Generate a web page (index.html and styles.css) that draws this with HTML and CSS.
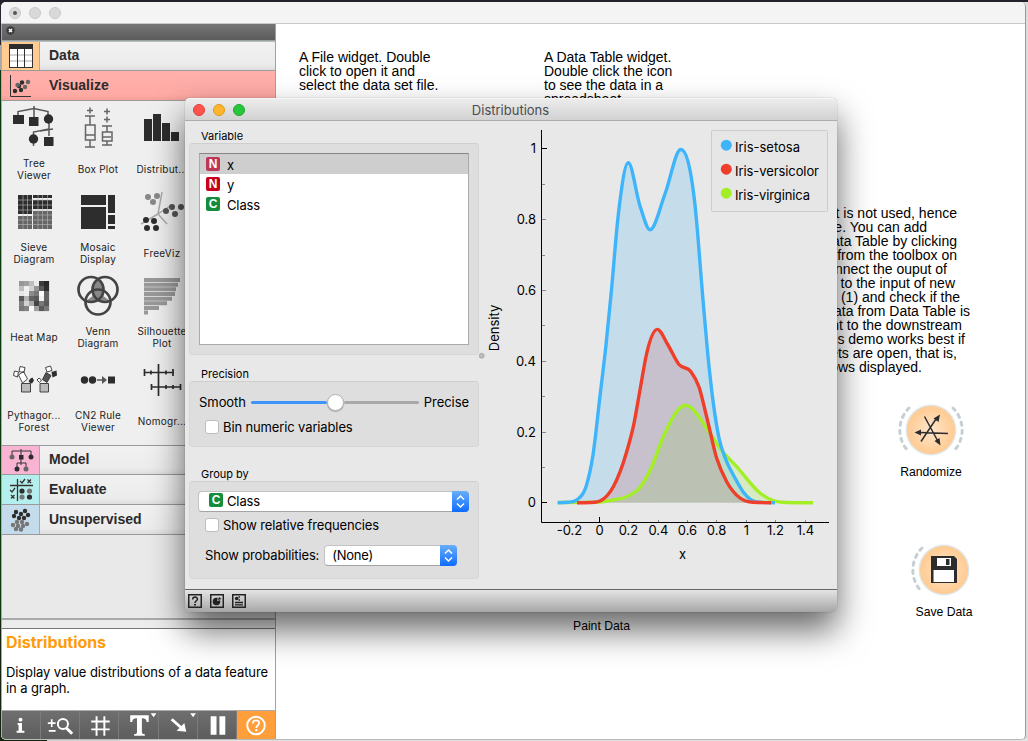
FILE: index.html
```html
<!DOCTYPE html>
<html lang="en">
<head>
<meta charset="utf-8">
<title>Distributions</title>
<link rel="stylesheet" href="styles.css">
</head>
<body>
<div class="window">
  <header class="titlebar"><i class="dot edited"></i><i class="dot"></i><i class="dot"></i></header>
  <div class="workspace">
    <aside class="dock">
      <div class="dock-head">
        <svg width="9" height="9" viewBox="0 0 9 9"><circle cx="4.500" cy="4.500" r="4.200" fill="#3c3c3c"/><path d="M3 3l3 3M6 3L3 6" stroke="#fff" stroke-width="1.500"/></svg>
      </div>
      <div class="cat data"><span class="cat-icon"><svg width="24" height="24" viewBox="0 0 24 24"><rect x="0.500" y="0.500" width="23" height="23" fill="#fff" stroke="#333"/><rect width="24" height="5" fill="#2d2d2d"/><path d="M1 11h22M1 17h22" stroke="#aaa"/><path d="M8.500 5v19M15.500 5v19" stroke="#333"/></svg></span><span>Data</span></div>
      <div class="cat visualize"><span class="cat-icon"><svg width="24" height="24" viewBox="0 0 24 24"><path d="M1.500 1v21.500H22" stroke="#333" fill="none"/><g fill="#2d2d2d"><circle cx="6" cy="17" r="2.200"/><circle cx="12" cy="16" r="2.200"/><circle cx="10" cy="12" r="2.200"/><circle cx="13" cy="8.500" r="2.200"/></g><g fill="#666"><circle cx="8.500" cy="11" r="2.200"/><circle cx="16" cy="13" r="2.200"/><circle cx="19" cy="8" r="2.200"/></g></svg></span><span>Visualize</span></div>
      <div class="widgets">
        <div class="widget"><svg viewBox="0 0 44 44"><path d="M6 11V5.500L22 2.500 36 5.500V11M22 0v11M37 16v7L21.500 26v14M37 23v7M28 25l13-2" stroke="#555" stroke-width="1.500" fill="none"/><g fill="#2d2d2d"><rect x="1" y="9" width="11" height="9"/><rect x="17" y="11" width="9.500" height="9"/><circle cx="36.500" cy="13" r="4.700"/><circle cx="21.500" cy="33" r="4.700"/><rect x="32" y="31" width="9.500" height="9"/></g></svg><p>Tree<br>Viewer</p></div>
        <div class="widget"><svg viewBox="0 0 44 44"><g stroke="#666" stroke-width="1.500" fill="none"><path d="M14 1.500v6M11 4.500h6M9 10h10M14 10v9M14 34v7M9 41h10M9 29h10M31 2.500v6M28 5.500h6M31 10.500v6M28 13.500h6M26 20h10M31 20v6M31 35v4M26 39h10M27 31h8"/><rect x="9.500" y="19" width="9.500" height="15"/><rect x="26.500" y="26" width="9.500" height="9"/></g></svg><p>Box Plot</p></div>
        <div class="widget"><svg viewBox="0 0 44 44"><path d="M4 13h8v22H4zM13 8h8v27h-8zM22 17h8v18h-8zM31 26h8v9h-8z" fill="#2d2d2d"/></svg><p>Distribut...</p></div>
        <div class="widget"><svg viewBox="0 0 44 44"><path d="M6 5h14v19H6zM21 5h19v3H21zM21 10h19v9H21z" fill="#2d2d2d"/><path d="M6 26h14v13H6zM21 21h19v18H21z" fill="#666"/><path d="M11 5v34M15.500 5v34M26 5v34M30.500 5v34M35.500 5v34M6 10h34M6 15h34M6 20h34M6 30h34M6 34.500h34M21 25h19" stroke="#bbb" stroke-width=".6"/></svg><p>Sieve<br>Diagram</p></div>
        <div class="widget"><svg viewBox="0 0 44 44"><path d="M5 5h25v10H5zM5 17h25v22H5zM32 5h7v18h-7zM32 25h7v9h-7zM32 36h7v3h-7z" fill="#2d2d2d"/></svg><p>Mosaic<br>Display</p></div>
        <div class="widget"><svg viewBox="0 0 44 44"><path d="M22 2l-4 22L1 34M18 24l9 10M18 24l12-8" stroke="#aaa" stroke-width="1.500" fill="none"/><g fill="#888"><circle cx="8" cy="7" r="3"/><circle cx="17" cy="6" r="3"/><circle cx="13" cy="12" r="3"/></g><g fill="#555"><circle cx="26" cy="21" r="3"/><circle cx="32" cy="17" r="3"/><circle cx="41" cy="17" r="3"/><circle cx="35" cy="24" r="3"/></g><g fill="#2d2d2d"><circle cx="6" cy="30" r="3"/><circle cx="14" cy="31" r="3"/><circle cx="7" cy="38" r="3"/><circle cx="16" cy="38" r="3"/></g></svg><p>FreeViz</p></div>
        <div class="widget"><svg viewBox="0 0 44 44" id="heat"></svg><p>Heat Map</p></div>
        <div class="widget"><svg viewBox="0 0 44 44"><path d="M22 6a12.500 12.500 0 0 1 5.500 10v11H16.500V16A12.500 12.500 0 0 1 22 6M22 18l12 9-12 1-12-1z" fill="#888"/><g fill="none" stroke="#444" stroke-width="2.700"><circle cx="15" cy="15.500" r="12.500"/><circle cx="29" cy="15.500" r="12.500"/><circle cx="22" cy="28" r="12.500"/></g></svg><p>Venn<br>Diagram</p></div>
        <div class="widget"><svg viewBox="0 0 44 44"><path d="M4 4h36v4H4zM4 8.700h34v4H4zM4 13.300h32v4H4zM4 18h31v4H4zM4 22.700h28v4H4zM4 27.300h23v4H4zM4 32h15v4H4zM4 36.600h4v4H4z" fill="#999"/></svg><p>Silhouette<br>Plot</p></div>
        <div class="widget"><svg viewBox="0 0 44 44"><g stroke="#333" fill="#fff" stroke-width=".9"><path d="M6.500 17l5-3.500 4 7.500-5 4zM1.500 17.500l1-4.500 4 1-1 5zM8 8.500l5 1-1 5-5-1zM25 22l2-2 2.500 2-2 2.500zM33.500 9.500l5-1.500 1.500 4.500-5 1.500z"/><path d="M9.500 25.500h9V34h-9zM28 25.500h8.500V34H28z" fill="#bbb"/><path d="M30.500 21.500l3.500-7 5 3-4 7z" fill="#555"/></g><path d="M16.500 23l2-2.500 2-1 1.500 3-2 3-2-.5zM39.500 14l5-1.500.5 5-4.500 2z" fill="#2d2d2d"/></svg><p>Pythagor...<br>Forest</p></div>
        <div class="widget"><svg viewBox="0 0 44 44"><path d="M21 22h8" stroke="#555" stroke-width="1.500"/><path d="M26 18l5 4-5 4z" fill="#555"/><g fill="#2d2d2d"><circle cx="8.500" cy="22" r="3.700"/><circle cx="16.500" cy="22" r="3.700"/><path d="M32 18.500h7v7h-7z"/></g></svg><p>CN2 Rule<br>Viewer</p></div>
        <div class="widget"><svg viewBox="0 0 44 44"><path d="M18.500 6v32M4 14.500h30M11 29h30M4.500 11v7M33 11v7M11.500 26v6M40.500 26v6M11 12.500v4M26 12.500v4M26 27v4M33 27v4" stroke="#2d2d2d" stroke-width="1.700"/></svg><p>Nomogr...</p></div>
      </div>
      <div class="cat model"><span class="cat-icon"><svg width="26" height="26" viewBox="0 0 26 26"><path d="M4 9V4h19v5M13 2v16M9 21v-5h9v5" stroke="#333" fill="none"/><g fill="#666"><circle cx="4" cy="10" r="2.500"/><circle cx="18" cy="22" r="2.500"/></g><g fill="#2d2d2d"><path d="M11 8h4.500v4.500H11z"/><circle cx="23" cy="10" r="2.500"/><circle cx="9" cy="22" r="2.500"/></g></svg></span><span>Model</span></div>
      <div class="cat evaluate"><span class="cat-icon"><svg width="26" height="26" viewBox="0 0 26 26"><path d="M9.500 2v22M2 8.500h23M12 4l2 2 3-4M2 13l2 2 3-4M19.500 2.500l3.500 3.500M23 2.500l-3.500 3.500M3 18l3.500 3.500M6.500 18l-3.500 3.500" stroke="#333" stroke-width="1.300" fill="none"/><g fill="#2d2d2d"><circle cx="14" cy="14" r="2.600"/><circle cx="21.500" cy="20" r="2.600"/></g><g fill="#777"><circle cx="21.500" cy="14" r="2.600"/><circle cx="14" cy="20" r="2.600"/></g></svg></span><span>Evaluate</span></div>
      <div class="cat unsupervised"><span class="cat-icon"><svg width="26" height="26" viewBox="0 0 26 26"><g fill="#2d2d2d"><circle cx="8" cy="5" r="2.200"/><circle cx="13" cy="7" r="2.200"/><circle cx="17" cy="4" r="2.200"/><circle cx="6" cy="9" r="2.200"/><circle cx="11" cy="11" r="2.200"/><circle cx="16" cy="11" r="2.200"/><circle cx="20" cy="8" r="2.200"/></g><g fill="#777"><circle cx="9" cy="15" r="2.200"/><circle cx="14" cy="15" r="2.200"/><circle cx="5" cy="18" r="2.200"/><circle cx="10" cy="19" r="2.200"/><circle cx="15" cy="19" r="2.200"/><circle cx="19" cy="17" r="2.200"/><circle cx="8" cy="22" r="2.200"/><circle cx="13" cy="22.500" r="2.200"/></g></svg></span><span>Unsupervised</span></div>
      <div class="dock-space"></div>
      <div class="splitter"></div>
      <section class="help"><h2>Distributions</h2><p>Display value distributions of a data feature<br>in a graph.</p></section>
      <nav class="tools">
        <button><svg viewBox="0 0 39 28"><path d="M16 12h4.500v8H23v2h-8v-2h2v-6h-1z" fill="#fff"/><circle cx="19" cy="8.500" r="2" fill="#fff"/></svg></button>
        <button><svg viewBox="0 0 39 28"><g fill="none" stroke="#fff" stroke-width="1.700"><path d="M7 12h8M11 8v8M8 20h7"/><circle cx="22.500" cy="13" r="5.200" stroke-width="2"/><path d="M26 17l6 6" stroke-width="3"/></g></svg></button>
        <button><svg viewBox="-1.500 0 39 28"><path d="M15.500 5v20M23.500 5v20M10 10.500h19M10 18.500h19" stroke="#fff" stroke-width="2"/></svg></button>
        <button><svg viewBox="-1.500 0 39 28"><path d="M10 4h19v7h-2c-.5-3-1.500-4-5-4v14c0 2 1 2.500 3 2.500V25H14v-1.500c2 0 3-.5 3-2.500V7c-3.500 0-4.500 1-5 4h-2zM31 2h6l-3 4z" fill="#fff"/></svg></button>
        <button><svg viewBox="-1 0 39 28"><path d="M11 9l2-2 9 8 3-3 2 9-10-1 3-3zM31 2h6l-3 4z" fill="#fff"/></svg></button>
        <button><svg viewBox="-1 0 39 28"><path d="M12 5h6v19h-6zM21 5h6v19h-6z" fill="#fff"/></svg></button>
        <button class="active"><svg viewBox="0 0 39 28"><circle cx="19.500" cy="14.500" r="9" fill="none" stroke="#fff" stroke-width="2"/><path d="M16.300 12.500c0-4.500 6.500-4 6.500-.5 0 2-3 2.500-3 5" fill="none" stroke="#fff" stroke-width="1.900"/><circle cx="19.800" cy="19.300" r="1.200" fill="#fff"/></svg></button>
      </nav>
    </aside>
    <main class="canvas">
      <p class="note file">A File widget. Double<br>click to open it and<br>select the data set file.</p>
      <p class="note table">A Data Table widget.<br>Double click the icon<br>to see the data in a<br>spreadsheet.</p>
      <svg class="side-note" width="140" height="180" viewBox="832 204 140 180">
        <g text-anchor="end">
        <text x="957" y="218">t is not used, hence</text><text x="927" y="232">e. You can add</text><text x="957" y="246">ata Table by clicking</text><text x="957" y="260">from the toolbox on</text><text x="947" y="274">nnect the ouput of</text><text x="955" y="288">to the input of new</text><text x="960" y="302">(1) and check if the</text><text x="970" y="316">ata from Data Table is</text><text x="962" y="330">nt to the downstream</text><text x="965" y="344">is demo works best if</text><text x="957" y="358">ets are open, that is,</text><text x="922" y="372">ows displayed.</text>
        </g>
      </svg>
      <div class="node randomize">
        <svg width="72" height="56" viewBox="895 402 72 56"><defs><radialGradient id="peach"><stop offset="0" stop-color="#ffe5cc"/><stop offset="1" stop-color="#ffcb91"/></radialGradient></defs><circle cx="931" cy="430" r="25.500" fill="#dfe7ea"/><circle cx="931" cy="430" r="24" fill="url(#peach)"/><path d="M909 408a31 31 0 0 0 0 44M953 408a31 31 0 0 1 0 44" class="port"/><path d="M924.500 416.500l13 24M921 441.500l16-24M948 433.500l-28-1" stroke="#2d2d2d" stroke-width="1.500"/><path d="M940 414.500l-1.500 7.500-5-3.500zM940.500 445.500l-6-4.500 5-3zM914.500 432.500l6.500-3v6z" fill="#2d2d2d"/></svg>
        <span>Randomize</span>
      </div>
      <div class="node save">
        <svg width="72" height="56" viewBox="908 542 72 56"><circle cx="944" cy="570" r="25.500" fill="#dfe7ea"/><circle cx="944" cy="570" r="24" fill="url(#peach)"/><path d="M922 548a31 31 0 0 0 0 44" class="port"/><path d="M931 556h23l3 3v24h-26z" fill="#2d2d2d"/><path d="M933.500 570h20.500v12h-20.500zM937 558h14v8h-14z" fill="#fff"/><path d="M946 559h3.500v6H946z" fill="#2d2d2d"/></svg>
        <span>Save Data</span>
      </div>
      <span class="paint">Paint Data</span>
    </main>
  </div>
</div>

<div class="dialog">
  <header class="dialog-title"><i class="light red"></i><i class="light amber"></i><i class="light green"></i><h1>Distributions</h1></header>
  <div class="dialog-body">
    <div class="controls">
      <h3>Variable</h3>
      <section class="box variable"><ul class="list"><li class="selected"><b class="tag num dim">N</b>x</li><li><b class="tag num">N</b>y</li><li><b class="tag cls">C</b>Class</li></ul></section>
      <h3 class="h-precision">Precision</h3>
      <section class="box precision">
        <div class="slider"><span class="smooth">Smooth</span><div class="track"><div class="fill"></div><div class="knob"></div><div class="rest"></div></div><span class="precise">Precise</span></div>
        <label class="check"><i></i><span>Bin numeric variables</span></label>
      </section>
      <h3 class="h-group">Group by</h3>
      <section class="box group">
        <div class="select"><b class="tag cls">C</b><span>Class</span><em><svg width="17" height="21" viewBox="0 0 17 21"><path d="M5 8.500l3.500-3.500 3.500 3.500M5 12.500l3.500 3.500 3.500-3.500" stroke="#fff" stroke-width="1.500" fill="none"/></svg></em></div>
        <label class="check"><i></i><span>Show relative frequencies</span></label>
        <div class="prob"><span>Show probabilities:</span><div class="select small"><span>(None)</span><em><svg width="17" height="21" viewBox="0 0 17 21"><path d="M5 8.500l3.500-3.500 3.500 3.500M5 12.500l3.500 3.500 3.500-3.500" stroke="#fff" stroke-width="1.500" fill="none"/></svg></em></div></div>
      </section>
    </div>
    <svg class="plot" width="358" height="468" viewBox="479 121 358 468">
      <circle cx="481.700" cy="355.700" r="2.500" fill="#bbb" stroke="#999" stroke-width=".6"/>
      <g id="areas"></g><g id="lines"></g>
      <path d="M541.500 130v392.500H829" fill="none" stroke="#000"/>
      <g id="ticks"></g>
      <text transform="translate(499 328) rotate(-90)" text-anchor="middle">Density</text>
      <text x="682.500" y="559" text-anchor="middle">x</text>
      <rect x="711.500" y="130.500" width="116" height="81" rx="1" fill="#e6e6e6" stroke="#ccc"/>
      <circle cx="726.300" cy="145.200" r="5.500" fill="#3eb4fb"/><text x="735" y="152" textLength="65">Iris-setosa</text>
      <circle cx="726.300" cy="169.200" r="5.500" fill="#ef3e29"/><text x="735" y="176" textLength="84">Iris-versicolor</text>
      <circle cx="726.300" cy="193.200" r="5.500" fill="#a2ef27"/><text x="735" y="200" textLength="75">Iris-virginica</text>
    </svg>
  </div>
  <footer class="dialog-foot">
    <svg width="14" height="14" viewBox="0 0 14 14"><rect x=".75" y=".75" width="12.500" height="12.500" fill="none" stroke="#222" stroke-width="1.500"/><path d="M4.700 5.500c0-3.300 4.800-3 4.800-.4C9.500 6.800 7 6.800 7 9" fill="none" stroke="#222" stroke-width="1.500"/><path d="M6.200 10h1.600v1.500H6.200z"/></svg>
    <svg width="14" height="14" viewBox="0 0 14 14"><rect x=".75" y=".75" width="12.500" height="12.500" fill="none" stroke="#222" stroke-width="1.500"/><circle cx="6.500" cy="7.500" r="3.800" fill="#222"/><path d="M7 7l1-4 3 3z" fill="#bbb"/><path d="M8 6l1-3 2.500 2z" fill="#222"/></svg>
    <svg width="14" height="14" viewBox="0 0 14 14"><rect x=".75" y=".75" width="12.500" height="12.500" fill="none" stroke="#222" stroke-width="1.500"/><circle cx="4.700" cy="4.500" r="1.800" fill="#222"/><path d="M6.500 3H8M6.500 6H8M3 8.500h8M3 10.800h8" stroke="#222" stroke-width="1.300"/></svg>
  </footer>
</div>
<script src="chart.js"></script>
</body>
</html>
```
FILE: styles.css
```css
* { box-sizing: border-box; }
body { margin: 0; width: 1028px; height: 741px; overflow: hidden; position: relative; padding: 2px 2px 1px 1px;
  background: linear-gradient(#24232b 0 2px, transparent 2px), linear-gradient(90deg, #15240f 0 47px, #d0d0d0 47px 120px, #e2e2e2 120px) 0 739px / 100% 2px no-repeat, linear-gradient(90deg, transparent 50%, #ddd 50%), linear-gradient(#27282f 0 45px, #aaa 45px 70px, #0a3a0d 70px 620px, #15240f 620px);
  font-family: Inter, "Liberation Sans", sans-serif; color: #000; }
p, h1, h2, h3, ul { margin: 0; padding: 0; }
.window { width: 1025px; height: 738px; border-radius: 5px; overflow: hidden; background: #fff; display: flex; flex-direction: column; border-right: 1px solid #999; border-bottom: 1px solid #bbb; }
.titlebar { height: 22px; flex: none; background: #f4f4f4; border-bottom: 1px solid #c9c9c9; display: flex; gap: 8px; padding: 5px 0 0 8px; }
.dot { width: 12px; height: 12px; border-radius: 50%; background: #d9d9d9; border: 1px solid #c9c9c9; display: grid; place-items: center; }
.edited::after { content: ""; width: 4px; height: 4px; border-radius: 50%; background: #555; }
.workspace { flex: 1; min-height: 0; display: flex; }
.dock { width: 275px; flex: none; display: flex; flex-direction: column; background: #efefef; border-left: 1px solid #aaa; border-right: 1px solid #9da3a5; }
.dock-head { height: 17px; flex: none; background: linear-gradient(#757575, #5c5c5c); border-bottom: 1px solid #9aa1a1; padding: 2px 0 0 4px; line-height: 0; }
.cat { flex: none; height: 30px; display: flex; align-items: center; border-bottom: 1px solid #9a9a9a; background: linear-gradient(#f1f1f1, #ececec 80%, #dedede); font: bold 14px "Liberation Sans", Arial, sans-serif; color: #2b2b2b; gap: 9px; }
.cat > span:last-child { padding-bottom: 2px; }
.cat-icon { width: 38px; height: 100%; display: grid; place-items: center; border-right: 1px solid #aaa; }
.data { border-top: 1px solid #b5bdbd; }
.data .cat-icon { background: #ffcb91; }
.visualize { background: linear-gradient(#ffb0ab, #ffaaa5 80%, #f5a09a); }
.visualize .cat-icon { border-color: transparent; }
.model { border-top: 1px solid #9a9a9a; }
.model .cat-icon { background: #f9b4d4; }
.evaluate .cat-icon { background: #b5efed; }
.unsupervised .cat-icon { background: #c3dbea; }
.widgets { flex: none; height: 344px; display: grid; grid-template-columns: repeat(3, 64px); grid-auto-rows: 84px; }
.widget { display: flex; flex-direction: column; align-items: center; padding-top: 5px; }
.widget svg { width: 44px; height: 44px; flex: none; overflow: visible; }
.widget p { height: 26px; margin-top: 6px; display: flex; align-items: center; text-align: center; font-size: 10px; line-height: 12px; white-space: nowrap; color: #222; letter-spacing: .23px; }
.dock-space { flex: 1; background: #e9e9e9; border-bottom: 2px solid #a9a9a9; }
.splitter { height: 9px; flex: none; background: #ececec; border-bottom: 1px solid #777; }
.help { height: 82px; flex: none; background: #fff; padding: 4px 4px; border-bottom: 1px solid #aaa; }
.help h2 { font-size: 16px; line-height: 18px; color: #ff9c0b; letter-spacing: -.05px; }
.help p { font-size: 13px; line-height: 16px; margin-top: 13px; white-space: nowrap; letter-spacing: -.09px; }
.tools { height: 28px; flex: none; display: flex; background: linear-gradient(#6f6f6f, #5d5d5d); }
.tools button { flex: 1; min-width: 0; padding: 0; border: 0; border-right: 1px solid #7b7b7b; background: none; line-height: 0; }
.tools svg { width: 38px; height: 28px; }
.tools .active { background: #ff9f3c; border: 0; }
.canvas { flex: 1; position: relative; font: 14px/14px "Liberation Sans", Arial, sans-serif; }
.note, .side-note, .node, .paint { position: absolute; white-space: nowrap; }
.file { left: 23px; top: 26px; }
.table { left: 268px; top: 26px; }
.side-note { left: 556px; top: 180px; overflow: visible; }
.node { display: flex; flex-direction: column; align-items: center; gap: 7px; font-size: 12.200px; }
.randomize { left: 619px; top: 378px; }
.save { left: 632px; top: 518px; }
.port { fill: none; stroke: #c6d0d4; stroke-width: 3; stroke-dasharray: 3.200 5; stroke-linecap: round; }
.paint { left: 297px; top: 595px; font-size: 12.200px; }

.dialog { position: absolute; left: 185px; top: 98px; width: 652px; height: 514px; border-radius: 5px; background: #e8e8e8; overflow: visible; display: flex; flex-direction: column; box-shadow: 0 0 1px rgba(0,0,0,.5), 0 18px 34px rgba(0,0,0,.6); }
.dialog-title { height: 23px; flex: none; border-radius: 5px 5px 0 0; background: linear-gradient(#ececec, #d2d2d2); border-bottom: 1px solid #adadad; border-top: 1px solid #f6f6f6; display: flex; gap: 8px; padding: 5px 0 0 8px; }
.light { width: 12px; height: 12px; flex: none; border-radius: 50%; }
.red { background: #ff544d; border: 1px solid #df3e38; }
.amber { background: #ffb52e; border: 1px solid #de981f; }
.green { background: #28c63c; border: 1px solid #1ea72c; }
h1 { flex: 1; margin-right: 69px; text-align: center; font-weight: 400; font-size: 13px; line-height: 13px; color: #4c4c4c; }
.dialog-body { flex: 1; min-height: 0; display: flex; }
.controls { width: 294px; flex: none; padding: 8px 0 0 4px; font-size: 13px; letter-spacing: -.13px; }
h3 { font-size: 11px; line-height: 14px; font-weight: 400; padding-left: 12px; letter-spacing: 0; }
.box { width: 290px; background: #dedede; border: 1px solid #d3d3d3; border-color: #cfcfcf #d6d6d6 #d6d6d6; border-radius: 4px; }
.variable { height: 212px; padding: 9px; }
.list { list-style: none; height: 192px; width: 270px; background: #fff; border: 1px solid #aaa; border-top-color: #858585; }
.list li { height: 20px; display: flex; align-items: center; gap: 7px; padding: 1px 0 0 6px; }
.list .tag { margin-top: -2px; }
.list .selected { background: #cecece; }
.tag { width: 14px; height: 14px; border-radius: 2px; color: #fff; font: 700 12px/14px "Liberation Sans", Arial, sans-serif; text-align: center; flex: none; }
.num { background: #c8001e; } .dim { background: #bf3556; } .cls { background: #158c3b; }
.h-precision { margin-top: 12px; }
.precision { height: 66px; padding: 10px 9px; }
.slider { display: flex; align-items: center; height: 20px; letter-spacing: -.05px; }
.smooth { width: 52px; } .precise { padding-left: 5px; }
.track { width: 168px; display: flex; align-items: center; }
.fill { width: 76px; height: 3px; background: #3f94fb; border-radius: 2px; }
.knob { width: 17px; height: 17px; border-radius: 50%; background: #fff; border: 1px solid #b2b2b2; box-shadow: 0 1px 1px #aaa; }
.rest { flex: 1; height: 3px; background: #a9a9a9; border-radius: 2px; }
.check { display: flex; align-items: center; gap: 4px; height: 18px; padding-left: 6px; white-space: nowrap; }
.check i { width: 14px; height: 14px; flex: none; border-radius: 3px; background: #fff; border: 1px solid #bdbdbd; }
.precision .check { margin-top: 6px; }
.h-group { margin-top: 20px; }
.group { height: 98px; padding: 9px 8px; }
.select { width: 271px; height: 21px; display: flex; align-items: center; background: #fff; border: 1px solid #c2c2c2; border-bottom-color: #a5a5a5; border-radius: 4px; padding-left: 10px; gap: 4px; }
.select em { margin-left: auto; width: 17px; height: 21px; margin-right: -1px; border-radius: 0 4px 4px 0; background: linear-gradient(#68aefa, #0f6cff); line-height: 0; }
.select > span { margin-top: -2px; }
.select > b { margin-top: -3px; }
.group .check { margin-top: 4px; padding-left: 7px; }
.prob { display: flex; align-items: center; margin-top: 11px; padding-left: 7px; white-space: nowrap; }
.prob > span { margin-top: -2px; }
.small { width: 133px; margin-left: 5px; padding-left: 7px; letter-spacing: -.25px; }
.plot { flex: none; font-size: 13px; }
.dialog-foot { height: 23px; flex: none; border-top: 1px solid #666; border-radius: 0 0 5px 5px; background: linear-gradient(#e4e4e4, #a6a6a6); display: flex; gap: 8px; padding: 4px 0 0 3px; }
```
FILE: chart.js
```js
const NS = 'http://www.w3.org/2000/svg';
function add(parent, name, attrs, text) {
  const el = document.createElementNS(NS, name);
  for (const k in attrs) el.setAttribute(k, attrs[k]);
  if (text !== undefined) el.textContent = text;
  parent.appendChild(el);
}
// Cubic Hermite path, flat at local extrema
function smooth(p) {
  const n = p.length, s = [], m = [];
  for (let i = 0; i < n - 1; i++) s.push((p[i + 1][1] - p[i][1]) / (p[i + 1][0] - p[i][0]));
  for (let i = 0; i < n; i++) {
    if (i === 0 || i === n - 1 || s[i - 1] * s[i] <= 0) { m.push(0); continue; }
    const h0 = p[i][0] - p[i - 1][0], h1 = p[i + 1][0] - p[i][0];
    const t = (s[i - 1] * h1 + s[i] * h0) / (h0 + h1);
    m.push(Math.sign(t) * Math.min(Math.abs(t), 3 * Math.abs(s[i - 1]), 3 * Math.abs(s[i])));
  }
  let d = `M${p[0]}`;
  for (let i = 0; i < n - 1; i++) {
    const h = (p[i + 1][0] - p[i][0]) / 3;
    d += `C${p[i][0] + h},${p[i][1] + m[i] * h} ${p[i + 1][0] - h},${p[i + 1][1] - m[i + 1] * h} ${p[i + 1]}`;
  }
  return d;
}
const virginica = ['#a2ef27', [[557,502.5],[580,502.4],[600,502],[613,500],[626.7,496.7],[640,487.3],[651.7,466.7],[663.3,436.7],[685.5,405.3],[710,433.3],[720,448.3],[736.7,466.7],[760,493],[773.3,500.7],[787,502.5],[813,502.7]]];
const setosa = ['#3eb4fb', [[558,502.7],[568,502.3],[577,499.7],[586,486.7],[593,455],[600,396],[606,345],[611,295],[618.5,213],[628.3,162.8],[640,206],[650,229.7],[665,194],[680.7,149.5],[695,205],[703,300],[707.7,353.3],[713.3,403],[719,438],[726,460],[735,478],[744,493],[756.7,502],[775,502.7]]];
const versicolor = ['#ef3e29', [[577,502.7],[590,502.5],[601,500.5],[613.3,486.7],[626.7,451.7],[634,423.3],[640,390],[646.7,353.3],[657.3,329.4],[668,345],[679,364.5],[691,371.7],[699,387],[706.7,417],[716.7,458.3],[726.7,481.7],[740,498],[753,502.3],[771,502.7]]];
const areas = document.getElementById('areas'), lines = document.getElementById('lines');
for (const [color, pts] of [virginica, versicolor, setosa])
  add(areas, 'path', { d: smooth(pts) + 'Z', fill: color, 'fill-opacity': .2 });
for (const [color, pts] of [virginica, setosa, versicolor])
  add(lines, 'path', { d: smooth(pts), fill: 'none', stroke: color, 'stroke-width': 3.4 });
const ticks = document.getElementById('ticks');
for (let i = 0; i <= 10; i++) {
  const y = Math.round(502.4 - i * 35.4) + .5, end = i % 10 === 0;
  add(ticks, 'path', { d: `M542 ${y}h${end ? 5 : i % 2 ? 3 : 4}`, stroke: end ? '#000' : '#888' });
  if (i % 2 === 0) add(ticks, 'text', { x: 536, y: y + 4.5, 'text-anchor': 'end' }, String(i / 10));
}
for (let i = -1; i <= 7; i++) {
  const x = Math.round(598.7 + i * 29.4) + .5;
  add(ticks, 'path', { d: `M${x} 522v${i === 0 ? -5 : -2}`, stroke: i === 0 ? '#000' : '#888' });
  add(ticks, 'text', { x: x, y: 535, 'text-anchor': 'middle' }, String(i * 2 / 10));
}
const heat = document.getElementById('heat');
const grey = [[150,160,190,235,60,40],[190,240,210,150,90,45],[230,240,140,120,250,100],[90,180,100,90,240,100],[130,210,170,70,120,90],[120,130,250,160,90,120]];
grey.forEach((row, y) => row.forEach((v, x) => add(heat, 'rect', { x: 7 + x * 5, y: 7 + y * 5, width: 5.1, height: 5.1, fill: `rgb(${v},${v},${v})` })));
```
